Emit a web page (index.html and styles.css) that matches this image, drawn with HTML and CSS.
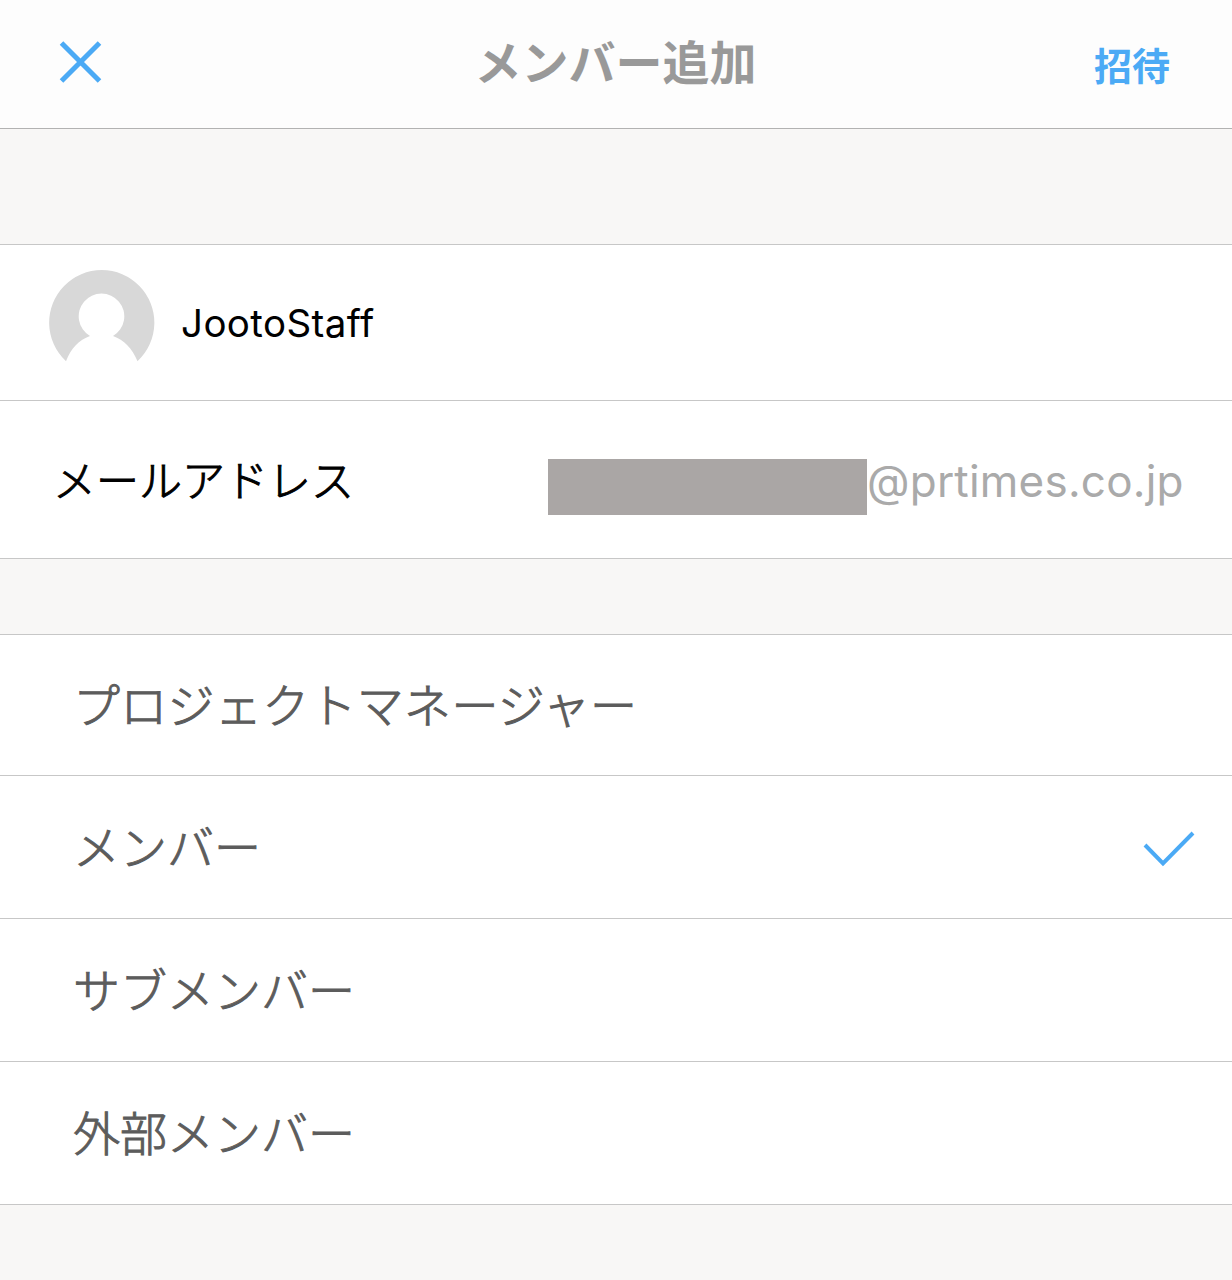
FILE: index.html
```html
<!DOCTYPE html>
<html lang="ja">
<head>
<meta charset="utf-8">
<title>メンバー追加</title>
<link rel="stylesheet" href="styles.css">
</head>
<body>
<header class="header">
  <button class="close" aria-label="閉じる"><svg width="43" height="42" viewBox="0 0 43 42"><path d="M2.5 2 40.5 40M40.5 2 2.5 40"/></svg></button>
  <h1 class="title">メンバー追加</h1>
  <button class="invite">招待</button>
</header>
<main>
  <section class="profile">
    <div class="row user">
      <svg class="avatar" width="106" height="106" viewBox="0 0 106 106"><path d="M17 91.2A52.6 52.6 0 1 1 88.5 91.2C83 78 75 70 64 66A22.8 22.8 0 1 0 41 66C30 70 22 78 17 91.2Z"/></svg>
      <span class="name">JootoStaff</span>
    </div>
    <div class="row email">
      <span class="label">メールアドレス</span>
      <span class="mask"></span>
      <span class="address">@prtimes.co.jp</span>
    </div>
  </section>
  <ul class="roles">
    <li class="role"><span class="role-name">プロジェクトマネージャー</span></li>
    <li class="role"><span class="role-name">メンバー</span><svg class="check" width="52" height="36" viewBox="0 0 52 36"><path d="M2 14 20 32.5 50 2"/></svg></li>
    <li class="role"><span class="role-name">サブメンバー</span></li>
    <li class="role"><span class="role-name">外部メンバー</span></li>
  </ul>
</main>
</body>
</html>
```
FILE: styles.css
```css
* { box-sizing: border-box; }
body { margin: 0; height: 1280px; background: #f8f7f6; font-family: Inter, "Noto Sans CJK JP", sans-serif; }
button { padding: 0; border: 0; background: none; font-family: inherit; }
.header { display: grid; grid-template-columns: 1fr auto 1fr; align-items: center; height: 129px; padding: 0 62px 4px 59px; background: #fdfdfd; border-bottom: 1px solid #b2b2b2; }
.close { display: flex; justify-self: start; }
.close svg { fill: none; stroke: #4baaf5; stroke-width: 5; }
.title { margin: 0; padding: 2px 0 0 2px; color: #999; font-size: 47px; line-height: 60px; font-weight: 700; }
.invite { justify-self: end; padding-top: 8px; color: #4baaf5; font-size: 38px; line-height: 50px; font-weight: 700; }
.profile { margin-top: 115px; border-top: 1px solid #c7c7c7; background: #fff; }
.row { display: flex; align-items: center; border-bottom: 1px solid #c7c7c7; }
.user { height: 156px; padding-left: 49px; }
.avatar { fill: #d8d8d8; }
.name { margin-left: 26px; padding-top: 1px; font-size: 38.5px; letter-spacing: 0.4px; font-variant-ligatures: none; font-feature-settings: "calt" 0; }
.email { height: 158px; padding: 0 50px 0 53px; }
.label { padding-bottom: 4px; font-size: 43px; font-weight: 300; -webkit-text-stroke: 1px; }
.mask { width: 319px; height: 56px; margin: 15px 0 0 auto; background: #aaa6a5; }
.address { width: 315px; padding-top: 2px; color: #aaa; font-size: 44px; letter-spacing: 0.22px; white-space: nowrap; text-align: right; }
.roles { list-style: none; margin: 75px 0 0; padding: 0; border-top: 1px solid #c7c7c7; background: #fff; }
.role { display: flex; align-items: center; justify-content: space-between; height: 143px; padding: 0 37px 0 73px; border-bottom: 1px solid #c7c7c7; color: #5c5c5c; font-size: 47px; font-weight: 300; }
.role:first-child { height: 141px; letter-spacing: 0.3px; }
.role-name { padding-bottom: 6px; -webkit-text-stroke: 1px; }
.check { margin-top: 3px; fill: none; stroke: #4baaf5; stroke-width: 4; }
```
